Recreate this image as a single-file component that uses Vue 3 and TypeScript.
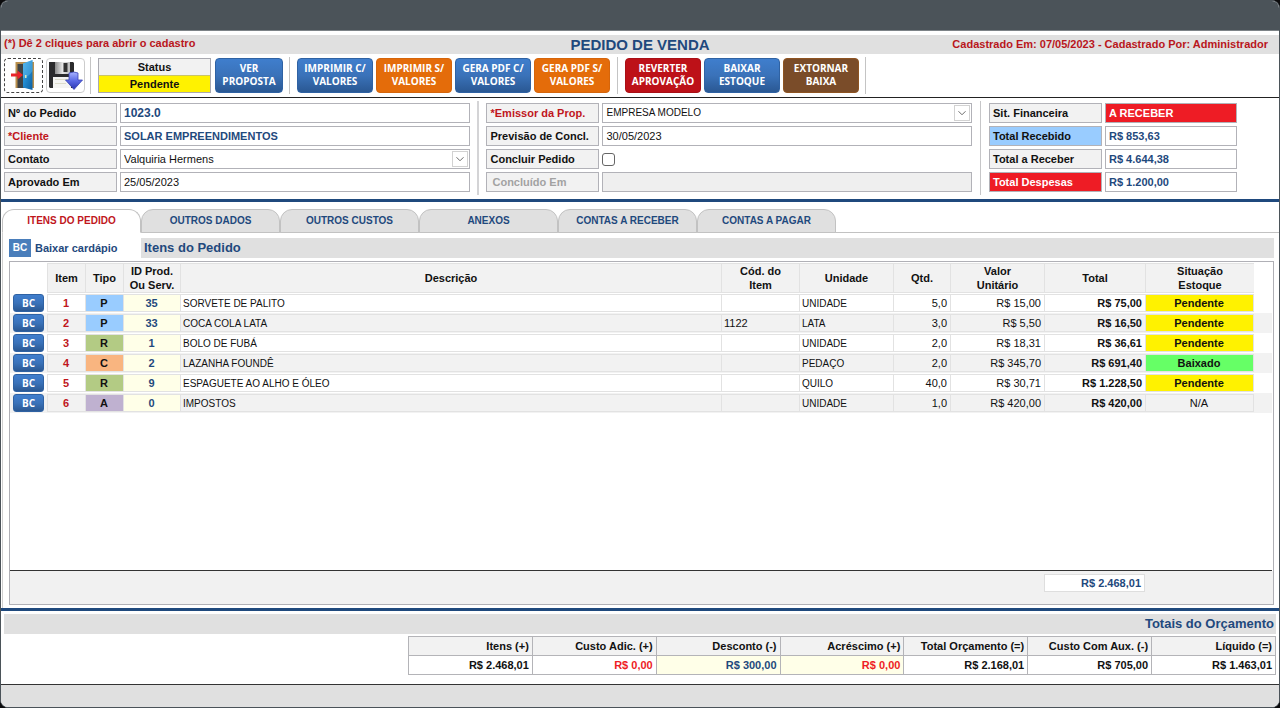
<script setup lang="ts">
import { ref } from 'vue'

type Action = { lines: [string, string]; tone: string }

const printActions: Action[] = [
  { lines: ['IMPRIMIR C/', 'VALORES'], tone: 'blue' },
  { lines: ['IMPRIMIR S/', 'VALORES'], tone: 'orange' },
  { lines: ['GERA PDF C/', 'VALORES'], tone: 'blue' },
  { lines: ['GERA PDF S/', 'VALORES'], tone: 'orange' },
]
const stockActions: Action[] = [
  { lines: ['REVERTER', 'APROVAÇÃO'], tone: 'red' },
  { lines: ['BAIXAR', 'ESTOQUE'], tone: 'blue' },
  { lines: ['EXTORNAR', 'BAIXA'], tone: 'brown' },
]

const finance = [
  { id: 'sit', label: 'Sit. Financeira', value: 'A RECEBER', labelTone: '', valueTone: 'alert' },
  { id: 'recebido', label: 'Total Recebido', value: 'R$ 853,63', labelTone: 'sky', valueTone: '' },
  { id: 'areceber', label: 'Total a Receber', value: 'R$ 4.644,38', labelTone: '', valueTone: '' },
  { id: 'despesas', label: 'Total Despesas', value: 'R$ 1.200,00', labelTone: 'alert', valueTone: '' },
]

const tabs = ['ITENS DO PEDIDO', 'OUTROS DADOS', 'OUTROS CUSTOS', 'ANEXOS', 'CONTAS A RECEBER', 'CONTAS A PAGAR']
const activeTab = ref(0)
const concluded = ref(false)

const columns: { name: string; lines: string[] }[] = [
  { name: 'item', lines: ['Item'] },
  { name: 'tipo', lines: ['Tipo'] },
  { name: 'id', lines: ['ID Prod.', 'Ou Serv.'] },
  { name: 'desc', lines: ['Descrição'] },
  { name: 'cod', lines: ['Cód. do', 'Item'] },
  { name: 'unid', lines: ['Unidade'] },
  { name: 'qtd', lines: ['Qtd.'] },
  { name: 'valor', lines: ['Valor', 'Unitário'] },
  { name: 'total', lines: ['Total'] },
  { name: 'sit', lines: ['Situação', 'Estoque'] },
]

const items = [
  { n: 1, tipo: 'P', id: 35, desc: 'SORVETE DE PALITO', cod: '', un: 'UNIDADE', qtd: '5,0', valor: 'R$ 15,00', total: 'R$ 75,00', sit: 'Pendente' },
  { n: 2, tipo: 'P', id: 33, desc: 'COCA COLA LATA', cod: '1122', un: 'LATA', qtd: '3,0', valor: 'R$ 5,50', total: 'R$ 16,50', sit: 'Pendente' },
  { n: 3, tipo: 'R', id: 1, desc: 'BOLO DE FUBÁ', cod: '', un: 'UNIDADE', qtd: '2,0', valor: 'R$ 18,31', total: 'R$ 36,61', sit: 'Pendente' },
  { n: 4, tipo: 'C', id: 2, desc: 'LAZANHA FOUNDÊ', cod: '', un: 'PEDAÇO', qtd: '2,0', valor: 'R$ 345,70', total: 'R$ 691,40', sit: 'Baixado' },
  { n: 5, tipo: 'R', id: 9, desc: 'ESPAGUETE AO ALHO E ÓLEO', cod: '', un: 'QUILO', qtd: '40,0', valor: 'R$ 30,71', total: 'R$ 1.228,50', sit: 'Pendente' },
  { n: 6, tipo: 'A', id: 0, desc: 'IMPOSTOS', cod: '', un: 'UNIDADE', qtd: '1,0', valor: 'R$ 420,00', total: 'R$ 420,00', sit: 'N/A' },
]

const totals = [
  { label: 'Itens (+)', value: 'R$ 2.468,01', tone: '' },
  { label: 'Custo Adic. (+)', value: 'R$ 0,00', tone: 'plus' },
  { label: 'Desconto (-)', value: 'R$ 300,00', tone: 'cream navy' },
  { label: 'Acréscimo (+)', value: 'R$ 0,00', tone: 'cream plus' },
  { label: 'Total Orçamento (=)', value: 'R$ 2.168,01', tone: '' },
  { label: 'Custo Com Aux. (-)', value: 'R$ 705,00', tone: '' },
  { label: 'Líquido (=)', value: 'R$ 1.463,01', tone: '' },
]

function sitClass(s: string): string {
  return s === 'Pendente' ? 'pending' : s === 'Baixado' ? 'done' : 'none'
}
</script>

<template>
  <div class="window">
    <div class="titlebar"></div>
    <header class="heading">
      <p class="hint">(*) Dê 2 cliques para abrir o cadastro</p>
      <h1>PEDIDO DE VENDA</h1>
      <p class="meta">Cadastrado Em: 07/05/2023 - Cadastrado Por: Administrador</p>
    </header>

    <div class="toolbar">
      <button class="icon-btn focused" type="button" aria-label="Sair">
        <svg viewBox="0 0 32 32" width="32" height="32">
          <defs>
            <linearGradient id="door" x1="0" y1="0" x2="1" y2="1">
              <stop offset="0" stop-color="#46b0ea" />
              <stop offset="0.5" stop-color="#1f86cc" />
              <stop offset="1" stop-color="#0e5f9f" />
            </linearGradient>
          </defs>
          <path d="M7.500 3H26V29H7.500z" fill="#b98f4c" />
          <path d="M9.500 5H24V29H9.500z" fill="#3f4345" />
          <path d="M15 4.500l9.500-3.500v30l-9.500-2.500z" fill="url(#door)" />
          <path d="M15 4.500l9.500-3.500v11q-4 6-9.500 7z" fill="#6cc4f2" opacity="0.4" />
          <rect x="17" y="16" width="1.500" height="3" fill="#d9ecc0" />
          <path d="M3 14.500h6.500V11.500l5.500 4.500-5.500 4.500v-3H3z" fill="#ea2429" />
        </svg>
      </button>
      <button class="icon-btn" type="button" aria-label="Salvar">
        <svg viewBox="0 0 36 32" width="36" height="32">
          <defs>
            <linearGradient id="arrow" x1="0" y1="0" x2="0" y2="1">
              <stop offset="0" stop-color="#a9b4ff" />
              <stop offset="0.5" stop-color="#5a69e6" />
              <stop offset="1" stop-color="#2834b0" />
            </linearGradient>
            <linearGradient id="shutter" x1="0" y1="0" x2="1" y2="0">
              <stop offset="0" stop-color="#8b8b8b" />
              <stop offset="0.5" stop-color="#e6e6e6" />
              <stop offset="1" stop-color="#bdbdbd" />
            </linearGradient>
          </defs>
          <path d="M1 3H25l1 1V29H2l-1-1z" fill="#2b2b2d" />
          <path d="M7 3H22V15H7z" fill="url(#shutter)" />
          <path d="M15.500 4H19.500V13H15.500z" fill="#333" />
          <path d="M5 18H23V29H5z" fill="#f4f4f2" />
          <path d="M7 20.500H21M7 24.500H18" stroke="#dcdccb" />
          <path d="M21 14q5-2 9 0v7h4.500l-8.500 9.500-8.500-9.500H21z" fill="url(#arrow)" stroke="#3742b5" stroke-width="0.800" />
        </svg>
      </button>
      <span class="sep"></span>
      <div class="status">
        <span class="status-title">Status</span>
        <span class="status-value">Pendente</span>
      </div>
      <button class="action blue narrow" type="button">VER<br />PROPOSTA</button>
      <span class="sep"></span>
      <div class="actions">
        <button v-for="a in printActions" :key="a.lines[0]" class="action" :class="a.tone" type="button">
          {{ a.lines[0] }}<br />{{ a.lines[1] }}
        </button>
      </div>
      <span class="sep wide"></span>
      <div class="actions">
        <button v-for="a in stockActions" :key="a.lines[0]" class="action" :class="a.tone" type="button">
          {{ a.lines[0] }}<br />{{ a.lines[1] }}
        </button>
      </div>
      <span class="sep"></span>
    </div>

    <form class="form" @submit.prevent>
      <div class="group first">
        <label class="lbl" for="pedido">Nº do Pedido</label>
        <input id="pedido" class="field strong number" type="text" value="1023.0" />
        <label class="lbl required" for="cliente">*Cliente</label>
        <input id="cliente" class="field strong" type="text" value="SOLAR EMPREENDIMENTOS" />
        <label class="lbl" for="contato">Contato</label>
        <div class="select">
          <select id="contato" class="field">
            <option>Valquiria Hermens</option>
          </select>
          <svg class="chevron" viewBox="0 0 16 16" width="16" height="16">
            <path d="M4 6l4 4 4-4" fill="none" stroke="#555" />
          </svg>
        </div>
        <label class="lbl" for="aprovado">Aprovado Em</label>
        <input id="aprovado" class="field" type="text" value="25/05/2023" />
      </div>
      <span class="divider"></span>
      <div class="group second">
        <label class="lbl required" for="emissor">*Emissor da Prop.</label>
        <div class="select">
          <select id="emissor" class="field caps">
            <option>EMPRESA MODELO</option>
          </select>
          <svg class="chevron" viewBox="0 0 16 16" width="16" height="16">
            <path d="M4 6l4 4 4-4" fill="none" stroke="#555" />
          </svg>
        </div>
        <label class="lbl" for="previsao">Previsão de Concl.</label>
        <input id="previsao" class="field" type="text" value="30/05/2023" />
        <label class="lbl" for="concluir">Concluir Pedido</label>
        <input id="concluir" v-model="concluded" class="check" type="checkbox" />
        <label class="lbl muted" for="concluido">Concluído Em</label>
        <input id="concluido" class="field" type="text" disabled />
      </div>
      <span class="divider thin"></span>
      <div class="group third">
        <template v-for="f in finance" :key="f.id">
          <label class="lbl" :class="f.labelTone" :for="f.id">{{ f.label }}</label>
          <input :id="f.id" class="field strong" :class="f.valueTone" type="text" :value="f.value" readonly />
        </template>
      </div>
    </form>

    <nav class="tabs">
      <button
        v-for="(t, i) in tabs"
        :key="t"
        class="tab"
        :class="{ active: i === activeTab }"
        type="button"
        @click="activeTab = i"
      >{{ t }}</button>
    </nav>

    <main class="pane">
      <div class="pane-head">
        <div class="legend"><span class="bc-tag">BC</span>Baixar cardápio</div>
        <h2>Itens do Pedido</h2>
      </div>
      <section class="frame">
        <div class="rows">
          <table class="items">
            <colgroup>
              <col class="c-bc" />
              <col v-for="c in columns" :key="c.name" :class="'c-' + c.name" />
              <col class="c-end" />
            </colgroup>
            <thead>
              <tr>
                <td></td>
                <th v-for="c in columns" :key="c.name" scope="col">
                  <div class="th"><span v-for="l in c.lines" :key="l">{{ l }}</span></div>
                </th>
                <td></td>
              </tr>
            </thead>
            <tbody>
              <tr v-for="r in items" :key="r.n">
                <td><button class="bc" type="button">BC</button></td>
                <td><div class="cell c num">{{ r.n }}</div></td>
                <td><div class="cell c b" :class="'t-' + r.tipo">{{ r.tipo }}</div></td>
                <td><div class="cell c ident">{{ r.id }}</div></td>
                <td><div class="cell caps">{{ r.desc }}</div></td>
                <td><div class="cell">{{ r.cod }}</div></td>
                <td><div class="cell caps">{{ r.un }}</div></td>
                <td><div class="cell r">{{ r.qtd }}</div></td>
                <td><div class="cell r">{{ r.valor }}</div></td>
                <td><div class="cell r b">{{ r.total }}</div></td>
                <td><div class="cell c last" :class="sitClass(r.sit)">{{ r.sit }}</div></td>
                <td></td>
              </tr>
            </tbody>
          </table>
        </div>
        <div class="sum"><output class="sum-box">R$ 2.468,01</output></div>
      </section>
    </main>

    <section class="totals">
      <h2>Totais do Orçamento</h2>
      <table>
        <thead>
          <tr><th v-for="t in totals" :key="t.label" scope="col">{{ t.label }}</th></tr>
        </thead>
        <tbody>
          <tr><td v-for="t in totals" :key="t.label" :class="t.tone">{{ t.value }}</td></tr>
        </tbody>
      </table>
    </section>
    <footer class="bottom"></footer>
  </div>
</template>

<style>
html,
body {
  background: #0b0b0c;
}
</style>

<style scoped>
* {
  box-sizing: border-box;
}
.window {
  display: flex;
  flex-direction: column;
  min-height: 100vh;
  overflow: hidden;
  border: 1px solid #4b5359;
  border-radius: 8px;
  background: #fff;
  color: #111;
  font: 11px/14px "Liberation Sans", Arial, sans-serif;
}
h1,
h2,
p {
  margin: 0;
}
button,
input,
select {
  font: inherit;
  color: inherit;
  margin: 0;
}
.titlebar {
  height: 30px;
  background: #4b5359;
  border-bottom: 1px solid #7d8387;
}
.heading {
  display: grid;
  grid-template-columns: 1fr auto 1fr;
  height: 19px;
  margin-top: 4px;
  background: #e0e0e0;
  color: #b9161c;
  font-weight: bold;
  line-height: 16px;
}
.heading .hint {
  padding-left: 3px;
}
.heading .meta {
  padding-right: 11px;
  line-height: 19px;
  text-align: right;
}
.heading h1 {
  font-size: 15px;
  line-height: 19px;
  color: #1f497d;
}
.toolbar {
  display: flex;
  align-items: center;
  height: 44px;
  padding: 0 3px 1px;
  border-bottom: 1px solid #222;
}
.icon-btn {
  display: grid;
  place-items: center;
  width: 39px;
  height: 35px;
  margin-right: 3px;
  padding: 0;
  border: 1px solid #ccc;
  border-radius: 4px;
  background: #fff;
}
.icon-btn.focused {
  border: 1px dashed #444;
}
.sep {
  width: 1px;
  height: 37px;
  margin: 0 7px 0 6px;
  background: #c4c4c4;
}
.sep.wide {
  margin-left: 7px;
}
.icon-btn + .sep {
  margin-left: 2px;
}
.status {
  display: flex;
  flex-direction: column;
  width: 113px;
  margin-right: 4px;
  border: 1px solid #a9a9b0;
  text-align: center;
  font-weight: bold;
  line-height: 16px;
}
.status-title {
  background: #f2f2f2;
}
.status-value {
  background: #fff200;
  border-top: 1px solid #c9c46a;
}
.actions {
  display: flex;
  gap: 3px;
}
.action {
  width: 76px;
  height: 35px;
  padding: 0 0 1px;
  border: 1px solid transparent;
  border-radius: 4px;
  color: #fff;
  font: bold 10px/13px "Open Sans", "Noto Sans", sans-serif;
}
.action.narrow {
  width: 68px;
}
.blue,
.bc {
  background: linear-gradient(#3f7ecd, #3a72b9 50%, #2a5893);
  border-color: #2f62a3;
}
.orange {
  background: #e46c0a;
  border-color: #d5650b;
}
.red {
  background: #bd1118;
  border-color: #a91016;
}
.brown {
  background: #7a4c29;
  border-color: #8e5422;
}
.form {
  display: flex;
  padding: 3px 42px 4px 3px;
  border-bottom: 3px solid #1f497d;
}
.group {
  display: grid;
  grid-template-columns: 113px 1fr;
  grid-auto-rows: 20px;
  gap: 3px;
  padding: 2px 0 3px;
}
.first {
  flex: 466 1 0;
}
.second {
  flex: 485 1 0;
}
.third {
  flex: 0 0 248px;
}
.divider {
  width: 2px;
  margin: 0 7px;
  background: #d4d4d6;
}
.divider.thin {
  width: 1px;
  margin: 0 8px;
  background: #c6c6c8;
}
.lbl {
  border: 1px solid #b2b2b8;
  background: #f2f2f2;
  padding: 0 3px;
  font-weight: bold;
  line-height: 18px;
  white-space: nowrap;
}
.required {
  color: #c0161c;
}
.muted {
  padding-left: 5px;
  color: #a2a2a2;
}
.field {
  width: 100%;
  height: 20px;
  padding: 0 3px;
  border: 1px solid #b2b2b8;
  border-radius: 0;
  background: #fff;
  outline: none;
  appearance: none;
}
.field:disabled {
  background: #efefef;
}
.strong {
  color: #1f497d;
  font-weight: bold;
}
.number {
  font-size: 12px;
}
.caps {
  font-size: 10px;
}
.sky {
  background: #99ccff;
}
.alert {
  background: #ee1c25;
  color: #fff;
}
.select {
  position: relative;
}
.chevron {
  position: absolute;
  top: 2px;
  right: 2px;
  border: 1px solid #d2d2d2;
  background: #fff;
  pointer-events: none;
}
.check {
  align-self: center;
  width: 13px;
  height: 13px;
  border: 1px solid #666;
  border-radius: 3px;
  appearance: none;
  background: #fff;
}
.check:checked {
  background: #1f497d;
}
.tabs {
  display: flex;
  margin: 7px 0 0 1px;
  background: linear-gradient(#c2c2c2, #c2c2c2) bottom / 100% 1px no-repeat;
}
.tab {
  width: 139px;
  height: 24px;
  padding: 0;
  border: 1px solid #c2c2c2;
  border-radius: 12px 12px 0 0;
  background: #e0e0e0;
  color: #1f497d;
  font-size: 10px;
  font-weight: bold;
}
.tab.active {
  border-bottom-color: #fff;
  background: #fff;
  color: #c0161c;
}
.pane {
  display: flex;
  flex: 1;
  flex-direction: column;
  margin-left: 1px;
  padding: 5px 5px 3px 6px;
  border-left: 1px solid #d0d0d0;
}
.pane-head {
  display: flex;
  align-items: center;
  margin-bottom: 3px;
}
.legend {
  display: flex;
  align-items: center;
  gap: 4px;
  width: 132px;
  color: #1f497d;
  font-weight: bold;
}
.bc-tag {
  width: 22px;
  background: #4a7ebb;
  color: #fff;
  font-size: 10px;
  line-height: 18px;
  text-align: center;
}
.pane-head h2 {
  flex: 1;
  padding-left: 3px;
  background: #e0e0e0;
  color: #1f497d;
  font-size: 13px;
  line-height: 20px;
}
.frame {
  display: flex;
  flex: 1;
  flex-direction: column;
  border: 1px solid #b0b0b6;
}
.rows {
  flex: 1;
  border-bottom: 1px solid #333;
  margin-right: 1px;
}
.items {
  width: 100%;
  table-layout: fixed;
  border-spacing: 0;
}
.c-bc { width: 37px; }
.c-item, .c-tipo { width: 38px; }
.c-id { width: 57px; }
.c-cod { width: 78px; }
.c-unid { width: 94px; }
.c-qtd { width: 57px; }
.c-valor { width: 94px; }
.c-total { width: 101px; }
.c-sit { width: 109px; }
.c-end { width: 18px; }
.items td {
  padding: 1px 0;
}
.items th {
  padding: 1px 0 0;
}
.th {
  display: flex;
  flex-direction: column;
  justify-content: center;
  height: 30px;
  border: 1px solid #e2e2e2;
  border-right: 0;
  background: #f2f2f2;
  text-align: center;
}
.items tbody tr:nth-child(even) td {
  background: #f2f2f2;
}
.cell {
  height: 18px;
  padding: 0 3px 0 2px;
  border: 1px solid #e2e2e2;
  border-right: 0;
  line-height: 17px;
  white-space: nowrap;
}
.c {
  text-align: center;
}
.r {
  text-align: right;
}
.b {
  font-weight: bold;
}
.num {
  color: #c0161c;
  font-weight: bold;
}
.ident {
  background: #ffffe8;
  color: #1f497d;
  font-weight: bold;
}
.t-P { background: #99ccff; }
.t-R { background: #b3cb84; }
.t-C { background: #f9b580; }
.t-A { background: #bfb1d0; }
.last {
  border-right: 1px solid #e2e2e2;
}
.pending {
  background: #fff200;
  font-weight: bold;
}
.done {
  background: #66ff66;
  font-weight: bold;
}
.bc {
  display: block;
  width: 31px;
  height: 18px;
  margin-left: 3px;
  padding: 0;
  border: 1px solid #2f62a3;
  border-radius: 3px;
  color: #fff;
  font: bold 10px/14px "Open Sans", "Noto Sans", sans-serif;
}
.sum {
  display: flex;
  justify-content: flex-end;
  height: 33px;
  padding: 3px 128px 0 0;
  background: #f1f1f1;
}
.sum-box {
  width: 101px;
  height: 18px;
  padding-right: 3px;
  border: 1px solid #dedede;
  background: #fff;
  color: #1f497d;
  font-weight: bold;
  line-height: 17px;
  text-align: right;
}
.totals {
  display: flex;
  flex-direction: column;
  align-items: flex-end;
  padding: 3px 3px 9px;
  border-top: 3px solid #1f497d;
}
.totals h2 {
  width: 100%;
  margin-bottom: 2px;
  padding-right: 2px;
  background: #e0e0e0;
  color: #1f497d;
  font-size: 13px;
  line-height: 20px;
  text-align: right;
}
.totals table {
  width: 868px;
  table-layout: fixed;
  border-collapse: collapse;
}
.totals th,
.totals td {
  height: 19px;
  padding: 0 3px;
  border: 1px solid #b4b4b8;
  font-weight: bold;
  text-align: right;
}
.totals th {
  background: #f2f2f2;
}
.totals .cream {
  background: #ffffe8;
}
.totals .plus {
  color: #ee1c25;
}
.totals .navy {
  color: #1f497d;
}
.bottom {
  height: 23px;
  border-top: 1px solid #333;
  background: #e0e0e0;
}
</style>
